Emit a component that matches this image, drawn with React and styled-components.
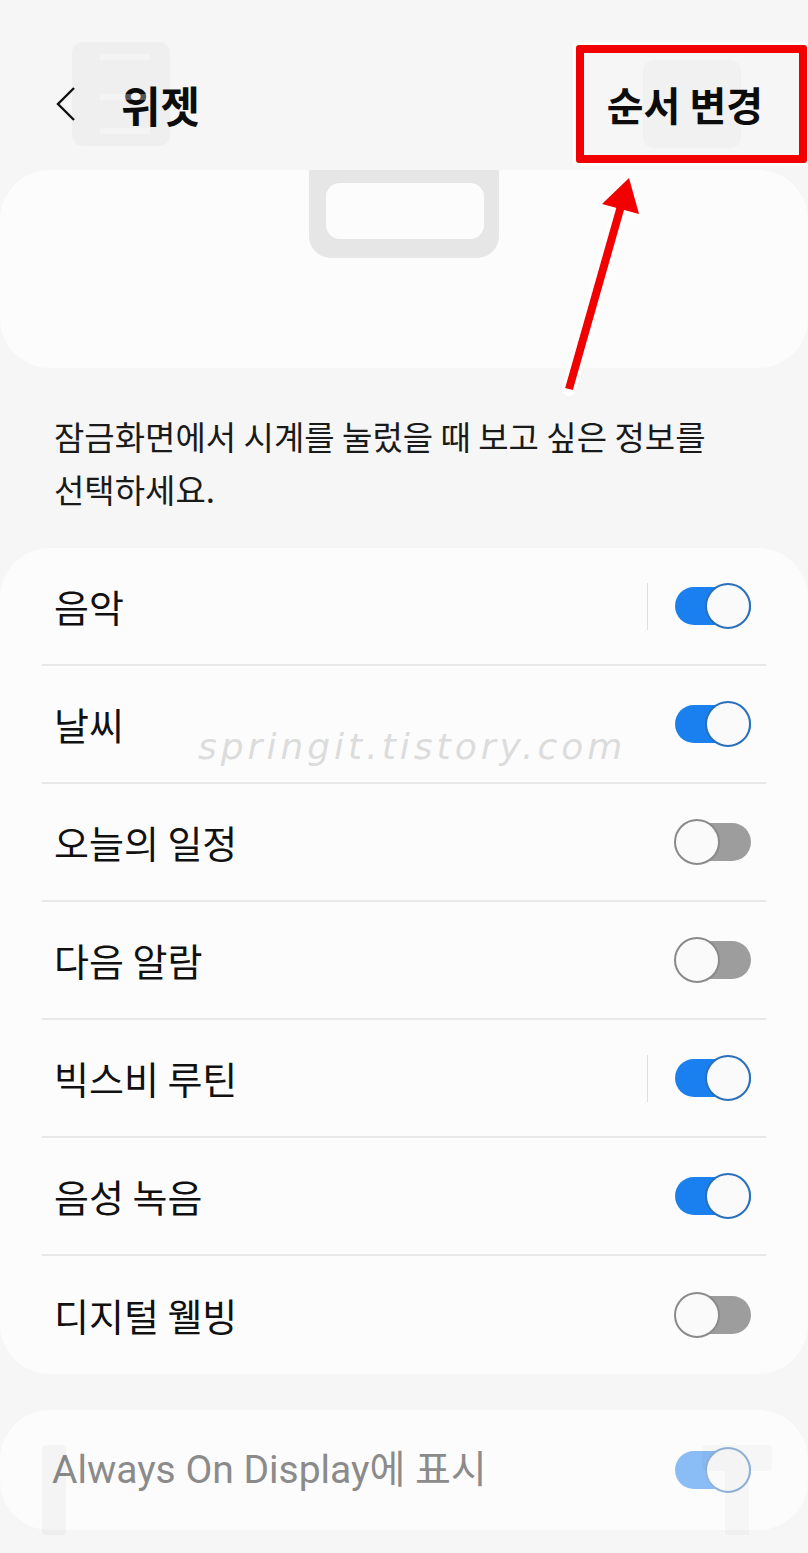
import styled, { createGlobalStyle } from "styled-components";

const GlobalStyle = createGlobalStyle`
  body {
    margin: 0;
    background: #f6f6f6;
  }
`;

const Page = styled.div`
  position: relative;
  width: 808px;
  min-height: 1553px;
  background: #f6f6f6;
  overflow: hidden;
  font-family: "Noto Sans CJK KR", "Noto Sans", sans-serif;
  color: #111;
`;

const Header = styled.header`
  display: flex;
  align-items: center;
  justify-content: space-between;
  box-sizing: border-box;
  height: 170px;
  padding: 38px 45px 0 55px;
`;

const TitleGroup = styled.div`
  display: flex;
  align-items: center;
  gap: 44px;
`;

const Title = styled.h1`
  margin: 0;
  font-size: 43px;
  font-weight: 700;
  line-height: 1;
  color: #0d0d0d;
`;

const Action = styled.span`
  font-size: 40px;
  font-weight: 700;
  line-height: 1;
  color: #0d0d0d;
`;

const Preview = styled.div`
  display: flex;
  justify-content: center;
  height: 198px;
  background: #fcfcfc;
  border-radius: 50px;
`;

const ClockTab = styled.div`
  box-sizing: border-box;
  width: 190px;
  height: 88px;
  padding: 13px 15px 0 17px;
  background: #e6e6e6;
  border-radius: 0 0 22px 22px;
`;

const ClockSlot = styled.div`
  height: 56px;
  background: #fcfcfc;
  border-radius: 14px;
`;

const Description = styled.p`
  margin: 0;
  padding: 42px 40px 0 54px;
  font-size: 33px;
  line-height: 53px;
  color: #1a1a1a;
  white-space: nowrap;
`;

const Card = styled.section`
  margin-top: ${({ $gap }) => $gap}px;
  padding: 0 42px;
  background: #fcfcfc;
  border-radius: 50px;
`;

const Row = styled.div`
  display: flex;
  align-items: center;
  box-sizing: border-box;
  height: ${({ $tall }) => ($tall ? 120 : 118)}px;
  padding: 0 15px 0 ${({ $tall }) => ($tall ? 10 : 12)}px;
  border-bottom: 2px solid #e8e8e8;

  &:last-child {
    border-bottom: none;
  }
`;

const Label = styled.span`
  flex: 1;
  font-size: 38px;
  line-height: 1.2;
  color: #111;
`;

const MutedLabel = styled(Label)`
  font-family: Roboto, "Noto Sans CJK KR", sans-serif;
  font-size: 39px;
  color: #8b8b8b;
`;

const Divider = styled.span`
  width: 1px;
  height: 47px;
  margin-right: 27px;
  background: #dedede;
`;

const Switch = styled.span`
  position: relative;
  flex-shrink: 0;
  width: 76px;
  height: 46px;
  opacity: ${({ $disabled }) => ($disabled ? 0.5 : 1)};

  &::before {
    content: "";
    position: absolute;
    left: 0;
    right: 0;
    top: 4px;
    height: 38px;
    border-radius: 19px;
    background: ${({ $on }) => ($on ? "#1a80ef" : "#9d9d9d")};
  }
`;

const Knob = styled.span`
  position: absolute;
  top: 0;
  left: ${({ $on }) => ($on ? 30 : -1)}px;
  box-sizing: border-box;
  width: 46px;
  height: 46px;
  border-radius: 50%;
  border: 2.5px solid ${({ $on }) => ($on ? "#2a6fbc" : "#8a8a8a")};
  background: #fafafa;
`;

const Watermark = styled.span`
  position: absolute;
  left: 198px;
  top: 726px;
  font-family: "DejaVu Sans", sans-serif;
  font-style: italic;
  font-weight: 200;
  font-size: 36px;
  letter-spacing: 4px;
  color: #dcdcdc;
  pointer-events: none;
`;

const Ghost = styled.svg`
  position: absolute;
  left: ${({ $x }) => $x}px;
  top: ${({ $y }) => $y}px;
  pointer-events: none;
`;

const Highlight = styled.div`
  position: absolute;
  left: 576px;
  top: 45px;
  box-sizing: border-box;
  width: 231px;
  height: 118px;
  border: 8px solid #f20000;
  border-radius: 3px;
  box-shadow: 0 0 0 3px #ffffff;
  pointer-events: none;
`;

const Arrow = styled.svg`
  position: absolute;
  left: 560px;
  top: 160px;
  pointer-events: none;
`;

const widgets = [
  { label: "음악", on: true, divider: true },
  { label: "날씨", on: true },
  { label: "오늘의 일정", on: false },
  { label: "다음 알람", on: false },
  { label: "빅스비 루틴", on: true, divider: true },
  { label: "음성 녹음", on: true },
  { label: "디지털 웰빙", on: false },
];

const Toggle = ({ on, disabled }) => (
  <Switch $on={on} $disabled={disabled}>
    <Knob $on={on} />
  </Switch>
);

const App = () => {
  return (
    <>
      <GlobalStyle />
      <Page>
        <Header>
          <TitleGroup>
            <svg width="22" height="36" viewBox="0 0 22 36">
              <polyline
                points="19,2 3,18 19,34"
                fill="none"
                stroke="#111"
                strokeWidth="2.4"
                strokeLinejoin="miter"
              />
            </svg>
            <Title>위젯</Title>
          </TitleGroup>
          <Action>순서 변경</Action>
        </Header>

        <Preview>
          <ClockTab>
            <ClockSlot />
          </ClockTab>
        </Preview>

        <Description>
          잠금화면에서 시계를 눌렀을 때 보고 싶은 정보를
          <br />
          선택하세요.
        </Description>

        <Card $gap={32}>
          {widgets.map(({ label, on, divider }) => (
            <Row key={label}>
              <Label>{label}</Label>
              {divider && <Divider />}
              <Toggle on={on} />
            </Row>
          ))}
        </Card>

        <Card $gap={36}>
          <Row $tall>
            <MutedLabel>Always On Display에 표시</MutedLabel>
            <Toggle on disabled />
          </Row>
        </Card>

        {/* faint ghost shapes left over from the lock screen clock */}
        <Ghost $x={72} $y={42} width="100" height="106" viewBox="0 0 100 106">
          <rect x="0" y="0" width="98" height="104" rx="10" fill="#000" opacity="0.028" />
          <rect x="28" y="12" width="50" height="6" fill="#fff" opacity="0.3" />
          <rect x="28" y="52" width="50" height="6" fill="#fff" opacity="0.3" />
          <rect x="28" y="86" width="50" height="6" fill="#fff" opacity="0.3" />
        </Ghost>
        <Ghost $x={643} $y={60} width="100" height="90" viewBox="0 0 100 90">
          <rect x="0" y="0" width="98" height="88" rx="10" fill="#000" opacity="0.018" />
        </Ghost>
        <Ghost $x={42} $y={1445} width="26" height="92" viewBox="0 0 26 92">
          <rect x="0" y="0" width="24" height="90" rx="4" fill="#000" opacity="0.03" />
        </Ghost>
        <Ghost $x={702} $y={1445} width="72" height="92" viewBox="0 0 72 92">
          <rect x="0" y="0" width="70" height="26" rx="4" fill="#000" opacity="0.025" />
          <rect x="23" y="26" width="24" height="64" fill="#000" opacity="0.025" />
        </Ghost>

        <Watermark>springit.tistory.com</Watermark>

        <Highlight />
        <Arrow width="100" height="240" viewBox="560 160 100 240">
          <line x1="569" y1="389" x2="620" y2="209" stroke="#fff" strokeWidth="14" strokeLinecap="round" />
          <polygon points="629,178 639,214 602,204" fill="#fff" stroke="#fff" strokeWidth="6" strokeLinejoin="round" />
          <line x1="569" y1="389" x2="621" y2="206" stroke="#f20000" strokeWidth="8" />
          <polygon points="629,178 639,214 602,204" fill="#f20000" />
        </Arrow>
      </Page>
    </>
  );
};

export default App;
